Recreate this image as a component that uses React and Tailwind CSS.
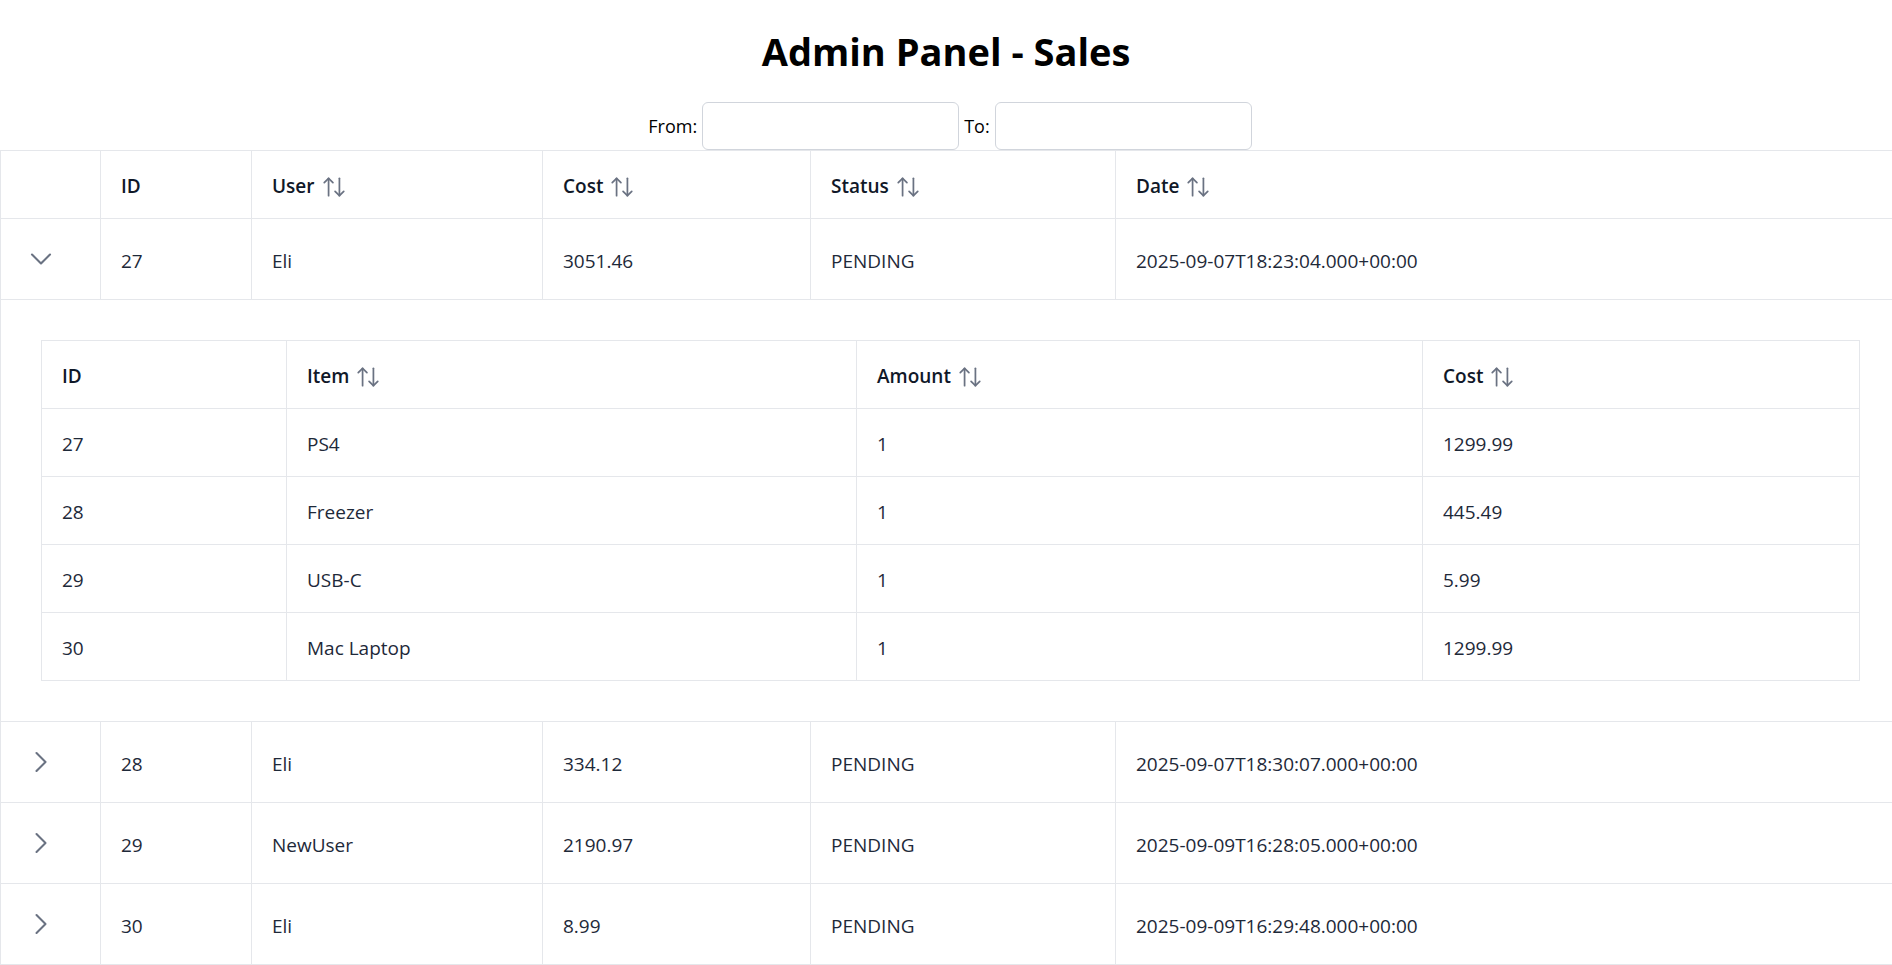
import { ChevronDown, ChevronRight, ArrowUpDown } from 'lucide-react';

const sales = [
  {
    id: 27,
    user: 'Eli',
    cost: '3051.46',
    status: 'PENDING',
    date: '2025-09-07T18:23:04.000+00:00',
    open: true,
    items: [
      { id: 27, item: 'PS4', amount: 1, cost: '1299.99' },
      { id: 28, item: 'Freezer', amount: 1, cost: '445.49' },
      { id: 29, item: 'USB-C', amount: 1, cost: '5.99' },
      { id: 30, item: 'Mac Laptop', amount: 1, cost: '1299.99' },
    ],
  },
  { id: 28, user: 'Eli', cost: '334.12', status: 'PENDING', date: '2025-09-07T18:30:07.000+00:00' },
  { id: 29, user: 'NewUser', cost: '2190.97', status: 'PENDING', date: '2025-09-09T16:28:05.000+00:00' },
  { id: 30, user: 'Eli', cost: '8.99', status: 'PENDING', date: '2025-09-09T16:29:48.000+00:00' },
];

function HeaderCell({ label, sortable, last }) {
  return (
    <th
      className={`h-[68px] border-b border-gray-200 px-5 pt-1 text-left font-semibold text-gray-900 ${
        last ? '' : 'border-r'
      }`}
    >
      <div className="flex items-center gap-[6px]">
        <span>{label}</span>
        {sortable && <ArrowUpDown size={26} strokeWidth={1.6} className="text-gray-500" />}
      </div>
    </th>
  );
}

function ItemsTable({ items }) {
  return (
    <table className="w-full table-fixed border border-gray-200">
      <colgroup>
        <col className="w-[245px]" />
        <col className="w-[570px]" />
        <col className="w-[566px]" />
        <col />
      </colgroup>
      <thead>
        <tr>
          <HeaderCell label="ID" />
          <HeaderCell label="Item" sortable />
          <HeaderCell label="Amount" sortable />
          <HeaderCell label="Cost" sortable last />
        </tr>
      </thead>
      <tbody>
        {items.map((it) => (
          <tr key={it.id} className="h-[68px] text-gray-800">
            <td className="border-b border-r border-gray-200 px-5 pt-1">{it.id}</td>
            <td className="border-b border-r border-gray-200 px-5 pt-1">{it.item}</td>
            <td className="border-b border-r border-gray-200 px-5 pt-1">{it.amount}</td>
            <td className="border-b border-gray-200 px-5 pt-1">{it.cost}</td>
          </tr>
        ))}
      </tbody>
    </table>
  );
}

export default function App() {
  return (
    <div className="min-h-screen bg-white text-[19px] text-black" style={{ fontFamily: '"Open Sans", "Noto Sans", sans-serif' }}>
      <h1 className="pt-[25px] text-center text-[38px] font-bold leading-[52px]">Admin Panel - Sales</h1>

      <div className="mt-[25px] flex items-center justify-center pl-[8px] text-[18px]">
        <label htmlFor="from">From:</label>
        <input id="from" type="text" className="ml-[5px] h-12 w-[257px] rounded-md border border-gray-300" />
        <label htmlFor="to" className="ml-[5px]">To:</label>
        <input id="to" type="text" className="ml-[5px] h-12 w-[257px] rounded-md border border-gray-300" />
      </div>

      <table className="w-full table-fixed border-l border-t border-gray-200">
        <colgroup>
          <col className="w-[100px]" />
          <col className="w-[151px]" />
          <col className="w-[291px]" />
          <col className="w-[268px]" />
          <col className="w-[305px]" />
          <col />
        </colgroup>
        <thead>
          <tr>
            <HeaderCell label="" />
            <HeaderCell label="ID" />
            <HeaderCell label="User" sortable />
            <HeaderCell label="Cost" sortable />
            <HeaderCell label="Status" sortable />
            <HeaderCell label="Date" sortable last />
          </tr>
        </thead>
        <tbody>
          {sales.map((s) => (
            <>
              <tr key={s.id} className="h-[81px] text-gray-800">
                <td className="border-b border-r border-gray-200 pl-[22px]">
                  <button type="button" className="flex items-center text-gray-500">
                    {s.open ? (
                      <ChevronDown size={36} strokeWidth={1.4} />
                    ) : (
                      <ChevronRight size={36} strokeWidth={1.4} />
                    )}
                  </button>
                </td>
                <td className="border-b border-r border-gray-200 px-5 pt-1">{s.id}</td>
                <td className="border-b border-r border-gray-200 px-5 pt-1">{s.user}</td>
                <td className="border-b border-r border-gray-200 px-5 pt-1">{s.cost}</td>
                <td className="border-b border-r border-gray-200 px-5 pt-1">{s.status}</td>
                <td className="border-b border-gray-200 px-5 pt-1">{s.date}</td>
              </tr>
              {s.open && (
                <tr key={`${s.id}-items`}>
                  <td colSpan={6} className="border-b border-gray-200 py-10 pl-10 pr-8">
                    <ItemsTable items={s.items} />
                  </td>
                </tr>
              )}
            </>
          ))}
        </tbody>
      </table>
    </div>
  );
}
